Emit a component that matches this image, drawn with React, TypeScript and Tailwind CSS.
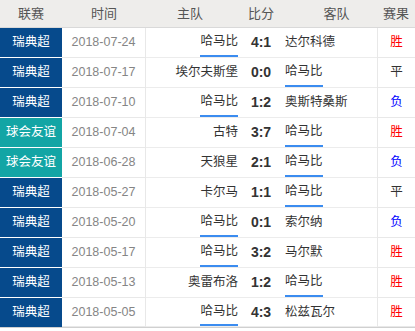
const matches = [
  { league: '瑞典超', date: '2018-07-24', home: '哈马比', score: '4:1', away: '达尔科德', result: '胜' },
  { league: '瑞典超', date: '2018-07-17', home: '埃尔夫斯堡', score: '0:0', away: '哈马比', result: '平' },
  { league: '瑞典超', date: '2018-07-10', home: '哈马比', score: '1:2', away: '奥斯特桑斯', result: '负' },
  { league: '球会友谊', date: '2018-07-04', home: '古特', score: '3:7', away: '哈马比', result: '胜' },
  { league: '球会友谊', date: '2018-06-28', home: '天狼星', score: '2:1', away: '哈马比', result: '负' },
  { league: '瑞典超', date: '2018-05-27', home: '卡尔马', score: '1:1', away: '哈马比', result: '平' },
  { league: '瑞典超', date: '2018-05-20', home: '哈马比', score: '0:1', away: '索尔纳', result: '负' },
  { league: '瑞典超', date: '2018-05-17', home: '哈马比', score: '3:2', away: '马尔默', result: '胜' },
  { league: '瑞典超', date: '2018-05-13', home: '奥雷布洛', score: '1:2', away: '哈马比', result: '胜' },
  { league: '瑞典超', date: '2018-05-05', home: '哈马比', score: '4:3', away: '松兹瓦尔', result: '胜' },
]

const TEAM = '哈马比'
const cols = 'grid grid-cols-[62px_84px_96px_38px_97px_38px]'
const cjk = "font-['Liberation_Sans','Noto_Sans_CJK_SC',sans-serif]"

const resultColor = (r: string) =>
  r === '胜' ? 'text-[#f00]' : r === '负' ? 'text-[#00f]' : 'text-[#333]'

const TeamName = ({ name }: { name: string }) =>
  name === TEAM ? (
    <span className="flex items-center h-full border-b-2 border-[#3b8cf0]">{name}</span>
  ) : (
    <span className="flex items-center h-full">{name}</span>
  )

export default function App() {
  return (
    <div className={`w-[415px] h-[331px] bg-white ${cjk}`}>
      <div className={`${cols} h-[28px] bg-[#eeedeb] border-b border-[#d9d9d9] text-[13px] text-[#555]`}>
        <div className="flex items-center justify-center">联赛</div>
        <div className="flex items-center justify-center">时间</div>
        <div className="flex items-center justify-center pr-[8px]">主队</div>
        <div className="flex items-center justify-center">比分</div>
        <div className="flex items-center justify-center pl-[16px]">客队</div>
        <div className="flex items-center justify-center">赛果</div>
      </div>

      {matches.map((m, i) => (
        <div
          key={i}
          className={`${cols} h-[30px] text-[12.5px] text-[#333] ${
            i === matches.length - 1 ? 'border-b border-[#d0d0d0]' : ''
          }`}
        >
          <div
            className={`flex items-center justify-center text-white ${
              m.league === '球会友谊' ? 'bg-[#13a5a5]' : 'bg-[#064a8c]'
            } ${i === matches.length - 1 ? '' : 'border-b border-white'}`}
          >
            {m.league}
          </div>
          <div className="flex items-center justify-center text-[#858585] border-r border-[#e8e8e8] border-b">
            {m.date}
          </div>
          <div className="flex justify-end pr-[4px] border-b border-[#ececec]">
            <TeamName name={m.home} />
          </div>
          <div className="flex items-center justify-center font-bold text-[14px] border-b border-[#ececec]">
            {m.score}
          </div>
          <div className="flex justify-start pl-[5px] border-b border-[#ececec]">
            <TeamName name={m.away} />
          </div>
          <div
            className={`flex items-center justify-center border-l border-b border-[#e8e8e8] ${resultColor(m.result)}`}
          >
            {m.result}
          </div>
        </div>
      ))}
    </div>
  )
}
